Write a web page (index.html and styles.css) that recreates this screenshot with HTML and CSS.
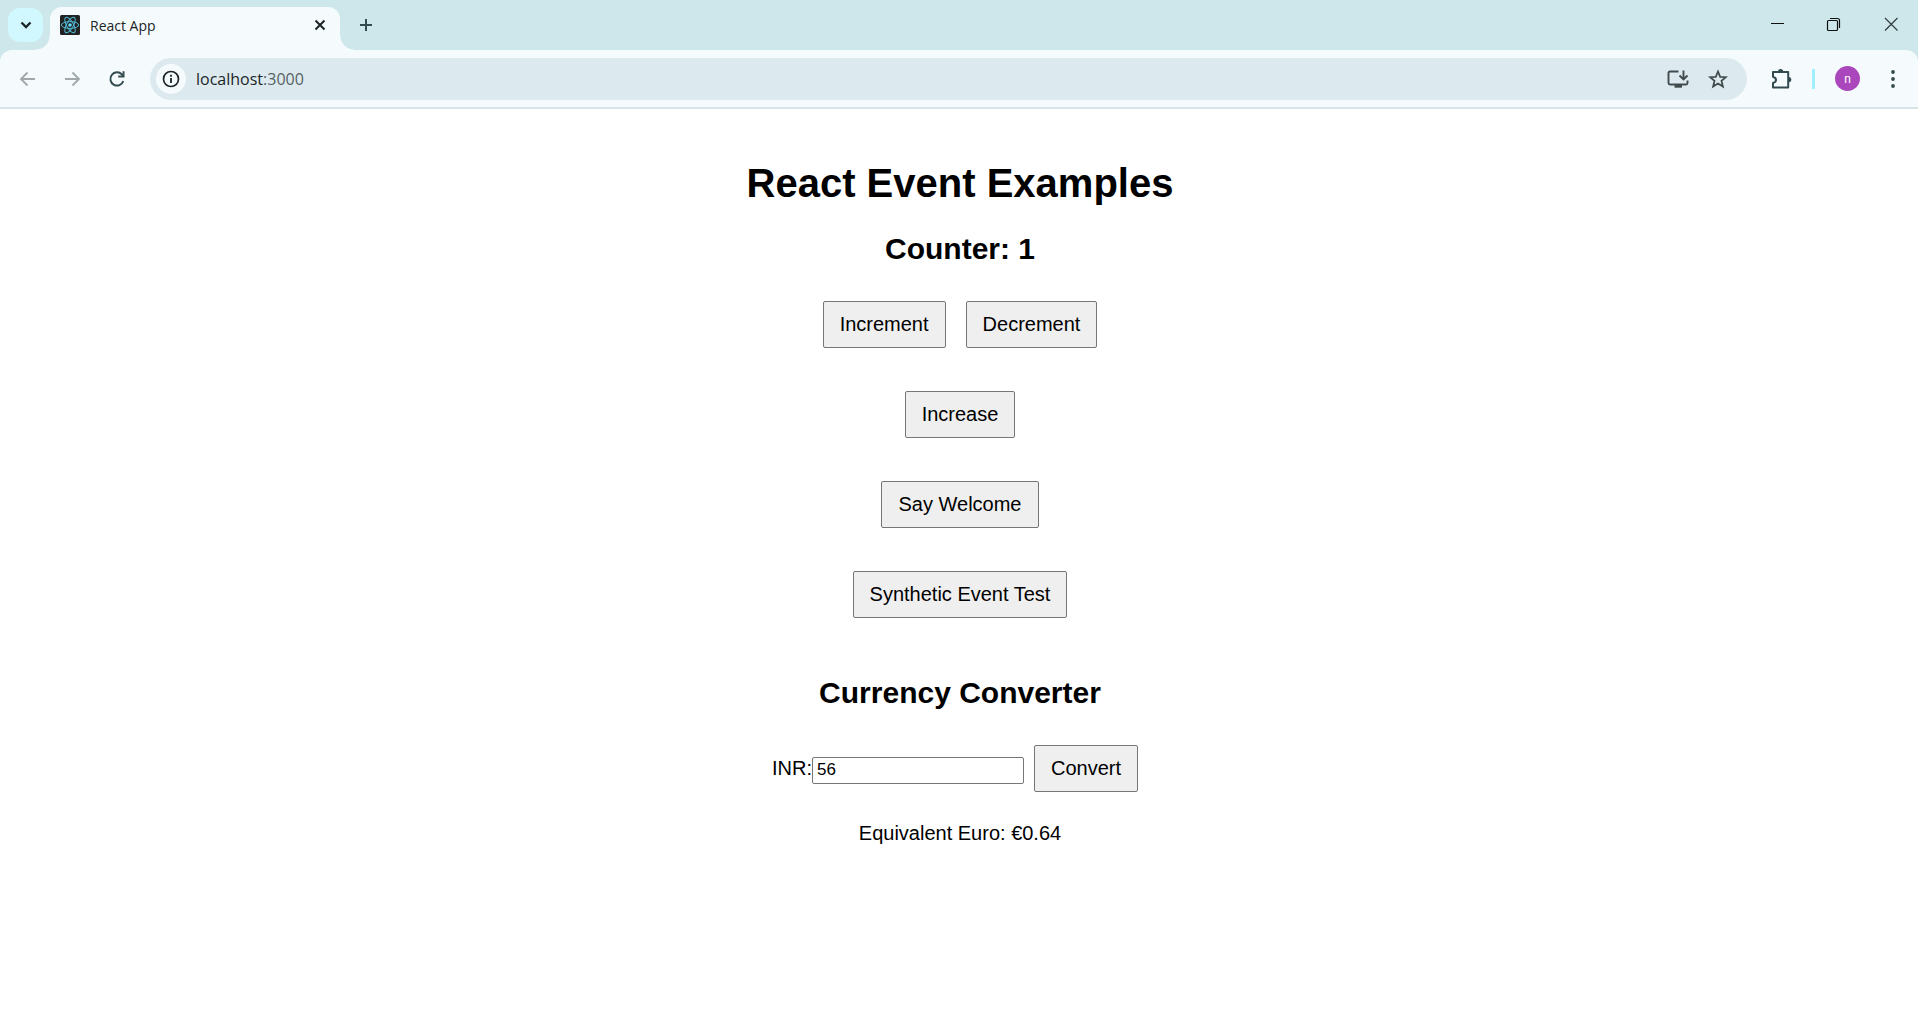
FILE: index.html
```html
<!DOCTYPE html>
<html lang="en">
<head>
<meta charset="utf-8">
<title>React App</title>
<link rel="stylesheet" href="styles.css">
</head>
<body>
<header class="browser">
  <div class="tab-strip">
    <button class="icon-button tab-search" aria-label="Search tabs">
      <svg width="20" height="20" viewBox="0 0 20 20"><path d="M5.500 7.500l4.500 4.500 4.500-4.500" fill="none" stroke="#1b2527" stroke-width="2.300"/></svg>
    </button>
    <div class="tab">
      <svg class="favicon" width="20" height="20" viewBox="0 0 20 20"><rect width="20" height="20" rx="1.500" fill="#222"/><g fill="none" stroke="#4fb8d0" stroke-width="1"><ellipse cx="10" cy="10" rx="8.700" ry="3.400"/><ellipse cx="10" cy="10" rx="8.700" ry="3.400" transform="rotate(60 10 10)"/><ellipse cx="10" cy="10" rx="8.700" ry="3.400" transform="rotate(120 10 10)"/></g><circle cx="10" cy="10" r="1.800" fill="#61dafb"/></svg>
      <span class="tab-title">React App</span>
      <button class="icon-button" aria-label="Close tab">
        <svg width="20" height="20" viewBox="0 0 20 20"><path d="M5.500 5.500l9 9m0-9l-9 9" stroke="#1b2527" stroke-width="2"/></svg>
      </button>
    </div>
    <button class="icon-button new-tab" aria-label="New tab">
      <svg width="20" height="20" viewBox="0 0 20 20"><path d="M10 4v12M4 10h12" stroke="#324b4f" stroke-width="2"/></svg>
    </button>
    <div class="window-controls">
      <button class="icon-button" aria-label="Minimize"><svg width="20" height="20" viewBox="0 0 20 20"><path d="M4 8.500h13" stroke="#111"/></svg></button>
      <button class="icon-button" aria-label="Restore"><svg width="20" height="20" viewBox="0 0 20 20"><rect x="3.500" y="5.500" width="10" height="10" rx="1" fill="none" stroke="#111" stroke-width="1.200"/><path d="M6 3.500h7.500q2 0 2 2V13" fill="none" stroke="#111" stroke-width="1.200"/></svg></button>
      <button class="icon-button" aria-label="Close"><svg width="20" height="20" viewBox="0 0 20 20"><path d="M4 3l12.500 12.500m0-12.500l-12.500 12.500" stroke="#333c3e" stroke-width="1.200"/></svg></button>
    </div>
  </div>
  <div class="toolbar">
    <button class="icon-button nav" aria-label="Back"><svg width="20" height="20" viewBox="0 0 20 20"><path d="M18 10H4.500M10.500 3.500l-6.500 6.500 6.500 6.500" fill="none" stroke="#a0a8aa" stroke-width="1.800"/></svg></button>
    <button class="icon-button nav" aria-label="Forward"><svg width="20" height="20" viewBox="0 0 20 20"><path d="M3 10h13.500M10.500 3.500l6.500 6.500-6.500 6.500" fill="none" stroke="#a0a8aa" stroke-width="1.800"/></svg></button>
    <button class="icon-button nav" aria-label="Reload"><svg width="20" height="20" viewBox="0 0 20 20"><path d="M16.300 12A6.600 6.600 0 1 1 14.800 5.400L16.500 7" fill="none" stroke="#324b4f" stroke-width="2"/><path d="M17.500 2.200v6.300h-6.300V6.500h4.300V2.200z" fill="#324b4f"/></svg></button>
    <div class="address">
      <button class="icon-button site-info" aria-label="Site information"><svg width="20" height="20" viewBox="0 0 20 20"><circle cx="10" cy="10" r="7.500" fill="none" stroke="#1b2527" stroke-width="1.700"/><path d="M10 9v5M10 5.800v1.900" stroke="#1b2527" stroke-width="1.800"/></svg></button>
      <div class="url" role="textbox" aria-label="Address">localhost<span class="port">:3000</span></div>
      <button class="icon-button install" aria-label="Install app"><svg width="22" height="20" viewBox="0 0 22 20"><path d="M11.500 2.500H3q-1.500 0-1.500 1.500v10q0 1.500 1.500 1.500h16q1.500 0 1.500-1.500v-2.500" fill="none" stroke="#414b4d" stroke-width="1.900"/><path d="M7.500 15.500h7.500v3.200H7.500z" fill="#414b4d"/><path d="M16.500 1.500v8.500M12.500 6.500l4 4 4-4" fill="none" stroke="#414b4d" stroke-width="1.900"/></svg></button>
      <button class="icon-button" aria-label="Bookmark"><svg width="20" height="20" viewBox="0 0 20 20"><path d="M10 2.500l2.200 5.300 5.700.4-4.400 3.700 1.400 5.600-4.900-3-4.900 3 1.400-5.600-4.400-3.700 5.700-.4z" fill="none" stroke="#414b4d" stroke-width="1.800"/></svg></button>
    </div>
    <button class="icon-button extensions" aria-label="Extensions"><svg width="22" height="22" viewBox="0 0 22 22"><path d="M3 4h15.200v15.500H3v-4.600q3-.8 3-3T3 8.800z" fill="none" stroke="#324b4f" stroke-width="2" stroke-linejoin="round"/><path d="M8 3.500a2.600 2.600 0 0 1 5.200 0zM18.700 9a2.600 2.600 0 0 1 0 5.200z" fill="#324b4f"/></svg></button>
    <span class="divider"></span>
    <button class="icon-button avatar" aria-label="Profile">n</button>
    <button class="icon-button menu" aria-label="Menu"><svg width="20" height="20" viewBox="0 0 20 20"><g fill="#324b4f"><circle cx="10" cy="3" r="1.900"/><circle cx="10" cy="10" r="1.900"/><circle cx="10" cy="17" r="1.900"/></g></svg></button>
  </div>
</header>
<main class="page">
  <h1 class="title">React Event Examples</h1>
  <h2 class="subtitle">Counter: 1</h2>
  <div class="actions">
    <div class="action-row"><button class="button">Increment</button><button class="button">Decrement</button></div>
    <button class="button">Increase</button>
    <button class="button">Say Welcome</button>
    <button class="button">Synthetic Event Test</button>
  </div>
  <h2 class="subtitle">Currency Converter</h2>
  <form class="converter">
    <label for="inr">INR:</label><input class="amount" id="inr" type="text" value="56"><button class="button" type="button">Convert</button>
  </form>
  <p class="result">Equivalent Euro: €0.64</p>
</main>
</body>
</html>
```
FILE: styles.css
```css
* { box-sizing: border-box; }

body {
  margin: 0;
  background: #fff;
  color: #000;
  font-family: "Liberation Sans", Arial, sans-serif;
  font-size: 20px;
}

h1, h2, p { margin: 0; }
svg { display: block; }

.browser {
  background: #cee7eb;
  font-family: "Open Sans", "Segoe UI", sans-serif;
}

.icon-button {
  display: flex;
  align-items: center;
  justify-content: center;
  flex: none;
  padding: 0;
  border: 0;
  background: none;
}

.tab-strip {
  display: flex;
  align-items: center;
  height: 50px;
  padding-left: 8px;
}

.tab-search {
  width: 35px;
  height: 34px;
  border-radius: 12px;
  background: #d1f7ff;
}

.tab {
  position: relative;
  display: flex;
  align-items: center;
  align-self: flex-end;
  width: 290px;
  height: 43px;
  margin-left: 7px;
  padding: 0 10px 7px;
  border-radius: 12px 12px 0 0;
  background: #f5fbfd;
}

/* Concave feet that join the tab to the toolbar */
.tab::before, .tab::after {
  content: "";
  position: absolute;
  bottom: 0;
  width: 14px;
  height: 14px;
}
.tab::before {
  right: 100%;
  background: radial-gradient(circle at 0 0, transparent 13px, #f5fbfd 14px);
}
.tab::after {
  left: 100%;
  background: radial-gradient(circle at 100% 0, transparent 13px, #f5fbfd 14px);
}

.tab-title {
  flex: 1;
  padding-left: 10px;
  color: #1b2527;
  font-size: 14px;
}

.new-tab { margin-left: 16px; }

.window-controls {
  display: flex;
  gap: 37px;
  margin-left: auto;
  padding-right: 17px;
}

.toolbar {
  display: flex;
  align-items: center;
  height: 59px;
  padding: 0 15px 0 17px;
  border-bottom: 2px solid #d8e4e7;
  border-radius: 12px 12px 0 0;
  background: #f5fbfd;
}

.nav { margin-right: 25px; }

.address {
  display: flex;
  align-items: center;
  flex: 1;
  height: 42px;
  margin-left: -2px;
  padding: 0 19px 0 6px;
  border-radius: 21px;
  background: #dceaef;
}

.site-info {
  width: 30px;
  height: 30px;
  border-radius: 50%;
  background: #f5fbfd;
}

.url {
  flex: 1;
  padding-left: 10px;
  color: #1b2527;
  font-size: 16px;
}

.port { color: #566164; }
.install { margin-right: 19px; }
.extensions { margin-left: 23px; }

.divider {
  width: 3px;
  height: 20px;
  margin: 0 20px;
  background: #a1f0fd;
}

.avatar {
  width: 25px;
  height: 25px;
  border-radius: 50%;
  background: #ab47bc;
  color: #fff;
  font-family: Roboto, sans-serif;
  font-size: 12px;
}

.menu { margin-left: 23px; }

.page {
  display: flex;
  flex-direction: column;
  align-items: center;
  padding: 51px 0 51px 2px;
}

.title {
  font-size: 40px;
  line-height: 46px;
}

.subtitle {
  margin-top: 26px;
  font-size: 30px;
  line-height: 34px;
}

.actions {
  display: flex;
  flex-direction: column;
  align-items: center;
  gap: 43px;
  margin: 35px 0 32px;
}

.action-row { display: flex; gap: 20px; }

.button {
  height: 47px;
  padding: 0 16px;
  border: 1px solid #767676;
  border-radius: 2px;
  background: #efefef;
  color: #000;
  font: inherit;
}

.converter {
  display: flex;
  align-items: baseline;
  margin-top: 35px;
  padding-right: 10px;
}

.amount {
  width: 212px;
  height: 27px;
  margin-right: 10px;
  padding: 0 4px;
  border: 1px solid #767676;
  border-radius: 2px;
  font-family: inherit;
  font-size: 17px;
}

.result {
  margin-top: 30px;
  line-height: 23px;
}
```
